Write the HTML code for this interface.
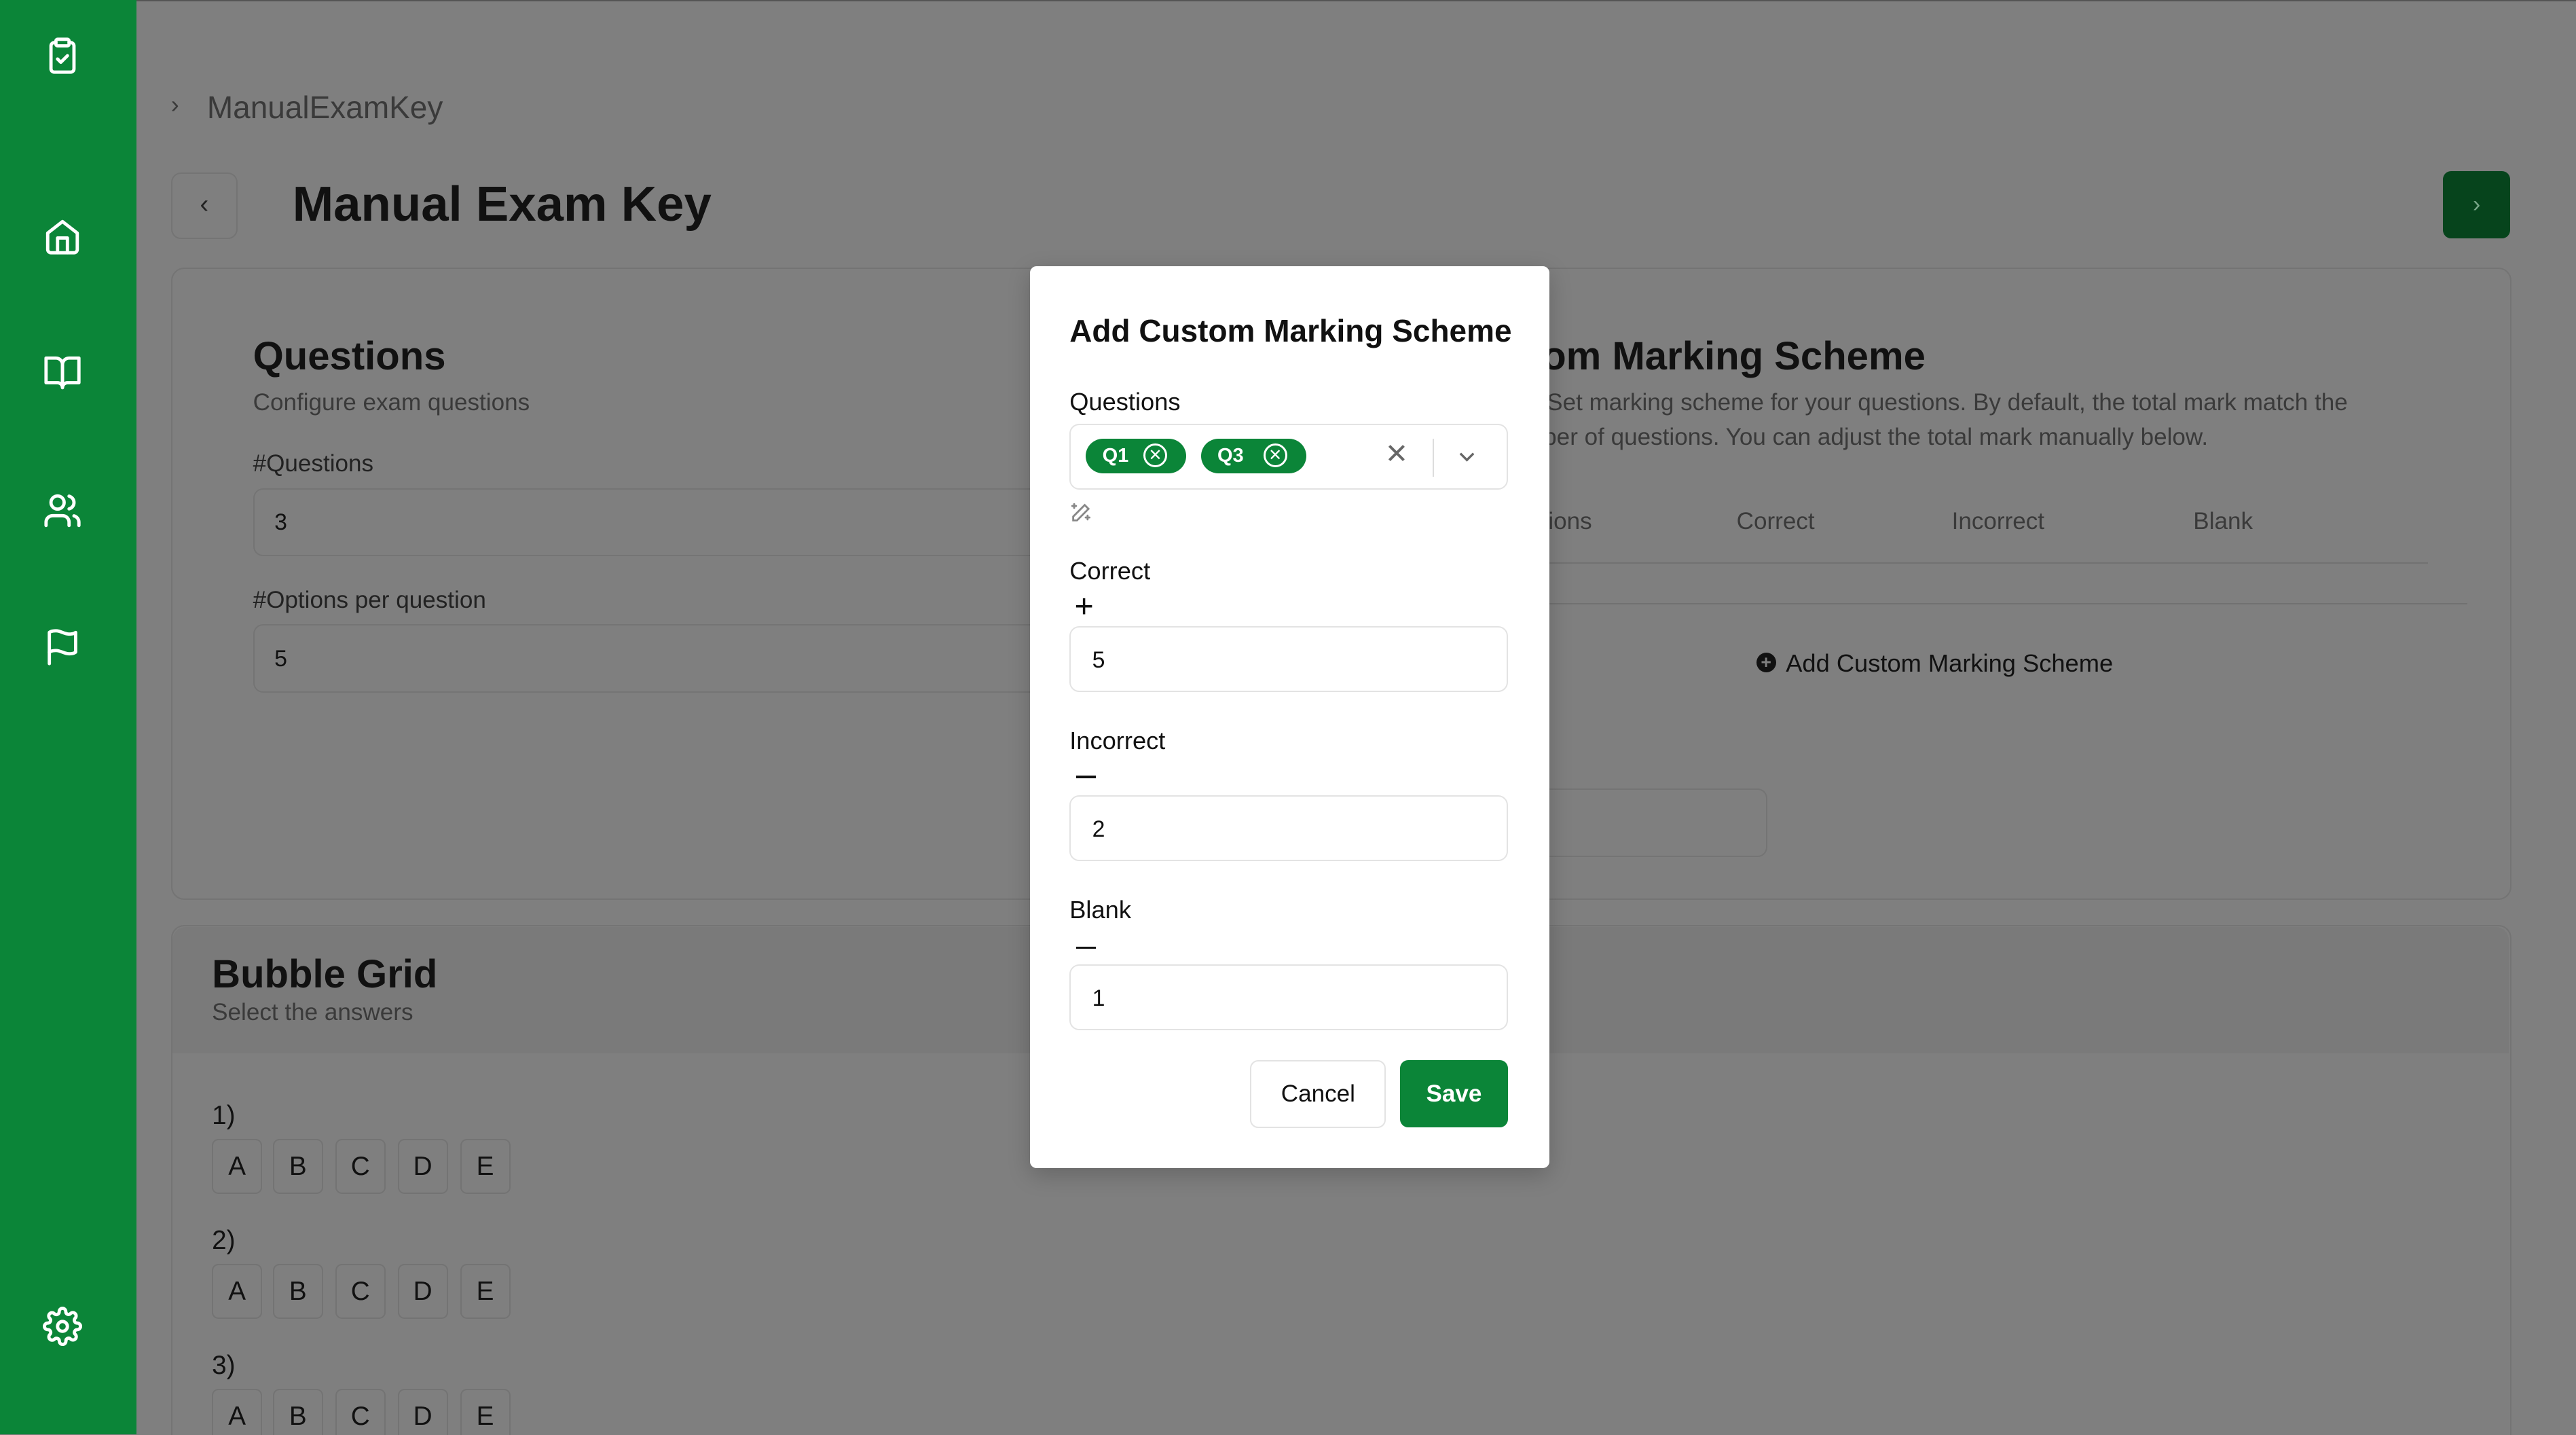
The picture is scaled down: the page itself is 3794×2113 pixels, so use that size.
<!DOCTYPE html>
<html><head><meta charset="utf-8"><style>
html,body{margin:0;padding:0;width:3794px;height:2113px;overflow:hidden;background:#7f7f7f}
#w{zoom:2.4197;width:1568px;height:873px;position:relative;font-family:"Liberation Sans",sans-serif;color:#111}
.a{position:absolute}
.side{left:0;top:0;width:83px;height:873px;background:#0b8538}
.ic{position:absolute;left:26px;width:24px;height:24px}
.card{border:1px solid #747474;border-radius:8px;background:#7f7f7f}
.inp{border:1px solid #747474;border-radius:6px;background:#7f7f7f;height:40px}
.g{color:#3a3a3a}
.r{text-align:right;white-space:nowrap}
.bub{position:absolute;width:29px;height:32px;border:1px solid #737373;border-radius:4px;font-size:16px;text-align:center;line-height:32px;color:#111}
.m{background:#fff;border-radius:4px;left:627px;top:162px;width:316px;height:549px;box-shadow:0 4px 14px rgba(0,0,0,.2)}
.mi{position:absolute;left:24px;width:267px;height:40px;border:1px solid #e3e3e3;border-radius:6px;background:#fff;font-size:14px;line-height:40px;box-sizing:border-box;padding-left:13px}
.lab{position:absolute;left:24px;font-size:15px;color:#111}
.chip{position:absolute;top:105px;height:21px;border-radius:11px;background:#0b8538;color:#fff;font-size:12px;font-weight:bold;line-height:21px;box-sizing:border-box;padding-left:10px}
.chip span{position:absolute;top:3px;width:12px;height:12px;border:1.5px solid #fff;border-radius:50%;font-size:10px;line-height:12px;text-align:center;font-weight:normal}
</style></head><body><div id="w">
<div class="a" style="left:0;top:0;width:1568px;height:1px;background:#555"></div>
<div class="a side">
<svg class="ic" style="top:22px" viewBox="0 0 24 24" fill="none" stroke="#fff" stroke-width="2" stroke-linecap="round" stroke-linejoin="round"><rect x="8" y="2" width="8" height="4" rx="1"/><path d="M16 4h1a2 2 0 0 1 2 2v14a2 2 0 0 1-2 2H7a2 2 0 0 1-2-2V6a2 2 0 0 1 2-2h1"/><path d="M9 14l2 2 4-4"/></svg>
<svg class="ic" style="top:132px" viewBox="0 0 24 24" fill="none" stroke="#fff" stroke-width="2" stroke-linecap="round" stroke-linejoin="round"><path d="M3 10l9-7 9 7v10a2 2 0 0 1-2 2H5a2 2 0 0 1-2-2z"/><path d="M9 22V13h6v9"/></svg>
<svg class="ic" style="top:215px" viewBox="0 0 24 24" fill="none" stroke="#fff" stroke-width="2" stroke-linecap="round" stroke-linejoin="round"><path d="M2 3h6a4 4 0 0 1 4 4v14a3 3 0 0 0-3-3H2z"/><path d="M22 3h-6a4 4 0 0 0-4 4v14a3 3 0 0 1 3-3h7z"/></svg>
<svg class="ic" style="top:299px" viewBox="0 0 24 24" fill="none" stroke="#fff" stroke-width="2" stroke-linecap="round" stroke-linejoin="round"><path d="M16 21v-2a4 4 0 0 0-4-4H6a4 4 0 0 0-4 4v2"/><circle cx="9" cy="7" r="4"/><path d="M22 21v-2a4 4 0 0 0-3-3.870M16 3.13a4 4 0 0 1 0 7.75"/></svg>
<svg class="ic" style="top:382px" viewBox="0 0 24 24" fill="none" stroke="#fff" stroke-width="2" stroke-linecap="round" stroke-linejoin="round"><path d="M4 15s1-1 4-1 5 2 8 2 4-1 4-1V3s-1 1-4 1-5-2-8-2-4 1-4 1z"/><path d="M4 22v-7"/></svg>
<svg class="ic" style="top:795px" viewBox="0 0 24 24" fill="none" stroke="#fff" stroke-width="2" stroke-linecap="round" stroke-linejoin="round"><circle cx="12" cy="12" r="3"/><path d="M19.4 15a1.65 1.65 0 0 0 .33 1.82l.06.06a2 2 0 1 1-2.830 2.83l-.06-.06a1.65 1.65 0 0 0-1.82-.33 1.65 1.65 0 0 0-1 1.51V21a2 2 0 1 1-4 0v-.09A1.65 1.65 0 0 0 9 19.4a1.65 1.65 0 0 0-1.82.33l-.06.06a2 2 0 1 1-2.83-2.83l.06-.06A1.65 1.65 0 0 0 4.68 15a1.65 1.65 0 0 0-1.51-1H3a2 2 0 1 1 0-4h.09A1.65 1.65 0 0 0 4.6 9a1.65 1.65 0 0 0-.33-1.82l-.06-.06a2 2 0 1 1 2.83-2.83l.06.06A1.65 1.65 0 0 0 9 4.68a1.65 1.65 0 0 0 1-1.51V3a2 2 0 1 1 4 0v.09a1.65 1.65 0 0 0 1 1.51 1.65 1.65 0 0 0 1.82-.33l.06-.06a2 2 0 1 1 2.83 2.83l-.06.06A1.65 1.65 0 0 0 19.4 9a1.65 1.65 0 0 0 1.51 1H21a2 2 0 1 1 0 4h-.09a1.65 1.65 0 0 0-1.51 1z"/></svg>
</div>
<div class="a g" style="left:104px;top:55px;font-size:15px">›</div>
<div class="a g" style="left:126px;top:54px;font-size:19px">ManualExamKey</div>
<div class="a" style="left:104px;top:105px;width:39px;height:39px;border:1px solid #747474;border-radius:6px;text-align:center;line-height:37px;font-size:16px;color:#222">‹</div>
<div class="a" style="left:178px;top:107px;font-size:30px;font-weight:600">Manual Exam Key</div>
<div class="a" style="left:1487px;top:104px;width:41px;height:41px;background:#06441c;border-radius:5px;color:#7aa88a;text-align:center;line-height:41px;font-size:14px">›</div>

<div class="a card" style="left:104px;top:163px;width:1423px;height:383px"></div>
<div class="a" style="left:154px;top:203px;font-size:24px;font-weight:600">Questions</div>
<div class="a g" style="left:154px;top:237px;font-size:14.5px">Configure exam questions</div>
<div class="a" style="left:154px;top:274px;font-size:14.5px;color:#222">#Questions</div>
<div class="a inp" style="left:154px;top:297px;width:500px"></div>
<div class="a" style="left:167px;top:310px;font-size:14px">3</div>
<div class="a" style="left:154px;top:357px;font-size:14.5px;color:#222">#Options per question</div>
<div class="a inp" style="left:154px;top:380px;width:500px"></div>
<div class="a" style="left:167px;top:393px;font-size:14px">5</div>

<div class="a r" style="right:calc(1568px - 1172px);top:203px;font-size:24px;font-weight:600">Custom Marking Scheme</div>
<div class="a g r" style="right:calc(1568px - 1429px);top:237px;font-size:14.5px">Set marking scheme for your questions. By default, the total mark match the</div>
<div class="a g r" style="right:calc(1568px - 1344px);top:258px;font-size:14.5px">number of questions. You can adjust the total mark manually below.</div>
<div class="a g r" style="right:calc(1568px - 969px);top:309px;font-size:14.5px">Questions</div>
<div class="a g" style="left:1057px;top:309px;font-size:14.5px">Correct</div>
<div class="a g" style="left:1188px;top:309px;font-size:14.5px">Incorrect</div>
<div class="a g" style="left:1335px;top:309px;font-size:14.5px">Blank</div>
<div class="a" style="left:785px;top:342px;width:693px;height:1px;background:#717171"></div>
<div class="a" style="left:785px;top:367px;width:717px;height:1px;background:#717171"></div>
<div class="a" style="left:1069px;top:397px;width:12px;height:12px;border-radius:50%;background:#111;color:#7f7f7f;font-size:11px;line-height:12px;text-align:center;font-weight:bold">+</div>
<div class="a" style="left:1087px;top:395px;font-size:15px;color:#111">Add Custom Marking Scheme</div>
<div class="a inp" style="left:785px;top:480px;width:289px"></div>

<div class="a card" style="left:104px;top:563px;width:1423px;height:330px"></div>
<div class="a" style="left:105px;top:564px;width:1422px;height:77px;background:#7a7a7a;border-radius:8px 8px 0 0"></div>
<div class="a" style="left:129px;top:579px;font-size:24px;font-weight:600">Bubble Grid</div>
<div class="a g" style="left:129px;top:608px;font-size:14.5px">Select the answers</div>
<div class="a" style="left:129px;top:670px;font-size:16px">1)</div>
<div class="a" style="left:129px;top:746px;font-size:16px">2)</div>
<div class="a" style="left:129px;top:822px;font-size:16px">3)</div>
<div class="bub" style="left:129px;top:693px">A</div><div class="bub" style="left:166px;top:693px">B</div><div class="bub" style="left:204px;top:693px">C</div><div class="bub" style="left:242px;top:693px">D</div><div class="bub" style="left:280px;top:693px">E</div>
<div class="bub" style="left:129px;top:769px">A</div><div class="bub" style="left:166px;top:769px">B</div><div class="bub" style="left:204px;top:769px">C</div><div class="bub" style="left:242px;top:769px">D</div><div class="bub" style="left:280px;top:769px">E</div>
<div class="bub" style="left:129px;top:845px">A</div><div class="bub" style="left:166px;top:845px">B</div><div class="bub" style="left:204px;top:845px">C</div><div class="bub" style="left:242px;top:845px">D</div><div class="bub" style="left:280px;top:845px">E</div>

<div class="a m">
<div class="a" style="left:24px;top:28px;font-size:19px;font-weight:600">Add Custom Marking Scheme</div>
<div class="lab" style="top:74px">Questions</div>
<div class="mi" style="top:96px"></div>
<div class="chip" style="left:34px;width:61px">Q1<span style="left:35px">✕</span></div>
<div class="chip" style="left:104px;width:64px">Q3<span style="left:38px">✕</span></div>
<div class="a" style="left:216px;top:104px;font-size:17px;color:#666">✕</div>
<div class="a" style="left:245px;top:105px;width:1px;height:23px;background:#ddd"></div>
<svg class="a" style="left:260px;top:110px" width="12" height="12" viewBox="0 0 12 12" fill="none" stroke="#666" stroke-width="1.4"><path d="M2 4l4 4 4-4"/></svg>
<svg class="a" style="left:24px;top:143px" width="14" height="14" viewBox="0 0 24 24" fill="none" stroke="#888" stroke-width="2" stroke-linecap="round"><path d="M16 4l4 4L8 20l-4 0 0-4z"/><path d="M5 3v4M3 5h4M19 15v4M17 17h4"/></svg>
<div class="lab" style="top:177px">Correct</div>
<div class="a" style="left:27px;top:197px;font-size:20px;line-height:20px">+</div>
<div class="mi" style="top:219px">5</div>
<div class="lab" style="top:280px">Incorrect</div>
<div class="a" style="left:28px;top:310px;width:12px;height:1.5px;background:#111"></div>
<div class="mi" style="top:322px">2</div>
<div class="lab" style="top:383px">Blank</div>
<div class="a" style="left:28px;top:414px;width:12px;height:1.5px;background:#111"></div>
<div class="mi" style="top:425px">1</div>
<div class="a" style="left:134px;top:483px;width:81px;height:40px;border:1px solid #e3e3e3;border-radius:5px;font-size:14.5px;text-align:center;line-height:40px">Cancel</div>
<div class="a" style="left:225px;top:483px;width:66px;height:41px;background:#0b8538;border-radius:5px;font-size:14.5px;font-weight:600;color:#fff;text-align:center;line-height:41px">Save</div>
</div>
</div></body></html>
